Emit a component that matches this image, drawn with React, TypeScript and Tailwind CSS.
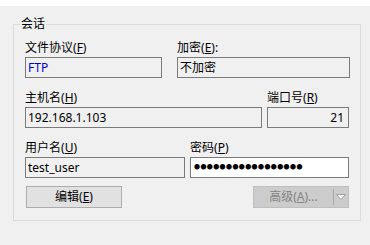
const font = "font-['Segoe_UI','Noto_Sans','Noto_Sans_CJK_SC',sans-serif]";

const Label = ({ text, k, colon }: { text: string; k: string; colon?: boolean }) => (
  <div className="h-[15px] leading-[15px] whitespace-nowrap">
    {text}(<span className="underline underline-offset-1">{k}</span>){colon ? ":" : ""}
  </div>
);

const Field = ({ value, className = "", white }: { value: string; className?: string; white?: boolean }) => (
  <div
    className={`mt-[2px] h-[21px] border border-[#7a7a7a] px-[2px] leading-[19px] whitespace-nowrap overflow-hidden ${
      white ? "bg-white" : "bg-[#f0f0f0]"
    } ${className}`}
  >
    {value}
  </div>
);

export default function App() {
  return (
    <div className={`w-[370px] h-[245px] bg-[#f0f0f0] text-[12px] text-black ${font}`}>
      <div className="h-[6px] bg-white" />
      <div className="pl-[13px] pt-[10px]">
        <fieldset className="w-[347px] border border-[#dcdcdc] pb-[12px]">
          <legend className="ml-[6px] px-[1px] leading-[16px]">会话</legend>

          <div className="pl-[11px] pr-[10px] pt-[8px]">
            {/* 文件协议 / 加密 */}
            <div className="flex gap-[15px]">
              <div className="w-[137px]">
                <Label text="文件协议" k="F" />
                <Field value="FTP" className="text-[#0000c8]" />
              </div>
              <div className="w-[173px]">
                <Label text="加密" k="E" colon />
                <Field value="不加密" />
              </div>
            </div>

            {/* 主机名 / 端口号 */}
            <div className="flex gap-[5px] mt-[12px]">
              <div className="w-[237px]">
                <Label text="主机名" k="H" />
                <Field value="192.168.1.103" />
              </div>
              <div className="w-[82px]">
                <Label text="端口号" k="R" />
                <Field value="21" className="text-right pr-[4px]" />
              </div>
            </div>

            {/* 用户名 / 密码 */}
            <div className="flex gap-[5px] mt-[12px]">
              <div className="w-[160px]">
                <Label text="用户名" k="U" />
                <Field value="test_user" />
              </div>
              <div className="w-[159px]">
                <Label text="密码" k="P" />
                <Field value={"●".repeat(17)} white className="text-[6px] tracking-[0.4px] pl-[3px]" />
              </div>
            </div>

            <div className="flex justify-between mt-[8px] pr-[1px]">
              <button className="ml-[1px] w-[96px] h-[22px] border border-[#adadad] bg-[#e1e1e1] leading-[20px]">
                编辑(<span className="underline underline-offset-1">E</span>)
              </button>
              <button
                disabled
                className="w-[96px] h-[22px] border border-[#bfbfbf] bg-[#cccccc] text-[#838383] flex items-center"
              >
                <span className="flex-1 text-center leading-[20px]">
                  高级(<span className="underline underline-offset-1">A</span>)...
                </span>
                <span className="w-px h-[16px] bg-[#a8a8a8]" />
                <span className="w-[14px] flex justify-center">
                  <svg width="10" height="6" viewBox="0 0 10 6">
                    <path d="M0.5 0.5 L9.5 0.5 L5 5.5 Z" fill="#f4f4f4" stroke="#a0a0a0" strokeWidth="1" />
                  </svg>
                </span>
              </button>
            </div>
          </div>
        </fieldset>
      </div>
    </div>
  );
}
